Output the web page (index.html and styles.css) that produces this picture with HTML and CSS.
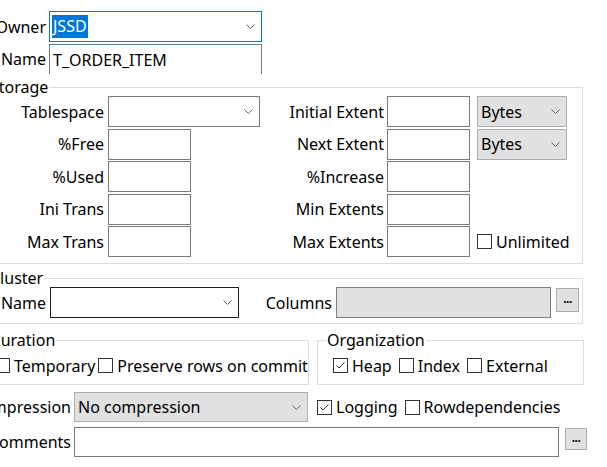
FILE: index.html
```html
<!DOCTYPE html>
<html>
<head>
<meta charset="utf-8">
<link rel="stylesheet" href="styles.css">
</head>
<body>
<div class="page">
  <div class="top">
    <div class="lbl">Owner</div>
    <div class="combo focus"><span class="sel">JSSD</span><svg class="chev" width="9" height="5" viewBox="0 0 9 5"><path d="M0.5 0.5 L4.5 4.5 L8.5 0.5"/></svg></div>
    <div class="lbl">Name</div>
    <div class="text name">T_ORDER_ITEM</div>
  </div>

  <fieldset class="group storage">
    <legend>Storage</legend>
    <div class="sgrid">
      <div class="lbl">Tablespace</div>
      <div class="combo"><span></span><svg class="chev" width="9" height="5" viewBox="0 0 9 5"><path d="M0.5 0.5 L4.5 4.5 L8.5 0.5"/></svg></div>
      <div class="lbl r">Initial Extent</div>
      <div class="text sm"></div>
      <div class="combo gray unit"><span>Bytes</span><svg class="chev" width="9" height="5" viewBox="0 0 9 5"><path d="M0.5 0.5 L4.5 4.5 L8.5 0.5"/></svg></div>

      <div class="lbl">%Free</div>
      <div class="text sm"></div>
      <div class="lbl r">Next Extent</div>
      <div class="text sm"></div>
      <div class="combo gray unit"><span>Bytes</span><svg class="chev" width="9" height="5" viewBox="0 0 9 5"><path d="M0.5 0.5 L4.5 4.5 L8.5 0.5"/></svg></div>

      <div class="lbl">%Used</div>
      <div class="text sm"></div>
      <div class="lbl r">%Increase</div>
      <div class="text sm"></div>
      <div></div>

      <div class="lbl">Ini Trans</div>
      <div class="text sm"></div>
      <div class="lbl r">Min Extents</div>
      <div class="text sm"></div>
      <div></div>

      <div class="lbl">Max Trans</div>
      <div class="text sm"></div>
      <div class="lbl r">Max Extents</div>
      <div class="text sm"></div>
      <div class="chk"><span class="box"></span><span>Unlimited</span></div>
    </div>
  </fieldset>

  <fieldset class="group cluster">
    <legend>Cluster</legend>
    <div class="crow">
      <div class="lbl cname">Name</div>
      <div class="combo dark ccombo"><span></span><svg class="chev" width="9" height="5" viewBox="0 0 9 5"><path d="M0.5 0.5 L4.5 4.5 L8.5 0.5"/></svg></div>
      <div class="lbl ccol">Columns</div>
      <div class="text disabled cols"></div>
      <div class="btn">...</div>
    </div>
  </fieldset>

  <div class="pair">
    <fieldset class="group dur">
      <legend>Duration</legend>
      <div class="checks">
        <div class="chk"><span class="box"></span><span>Temporary</span></div>
        <div class="chk"><span class="box"></span><span>Preserve rows on commit</span></div>
      </div>
    </fieldset>
    <fieldset class="group org">
      <legend>Organization</legend>
      <div class="checks">
        <div class="chk"><span class="box"><svg width="13" height="13" viewBox="0 0 13 13"><path d="M2.5 6.5 L5 9 L10.5 3.5"/></svg></span><span>Heap</span></div>
        <div class="chk"><span class="box"></span><span>Index</span></div>
        <div class="chk"><span class="box"></span><span>External</span></div>
      </div>
    </fieldset>
  </div>

  <div class="row comp">
    <div class="lbl blbl">Compression</div>
    <div class="combo gray compsel"><span>No compression</span><svg class="chev" width="9" height="5" viewBox="0 0 9 5"><path d="M0.5 0.5 L4.5 4.5 L8.5 0.5"/></svg></div>
    <div class="checks inline">
      <div class="chk"><span class="box"><svg width="13" height="13" viewBox="0 0 13 13"><path d="M2.5 6.5 L5 9 L10.5 3.5"/></svg></span><span>Logging</span></div>
      <div class="chk"><span class="box"></span><span>Rowdependencies</span></div>
    </div>
  </div>

  <div class="row comm">
    <div class="lbl blbl">Comments</div>
    <div class="text commbox"></div>
    <div class="btn cbtn">...</div>
  </div>
</div>
</body>
</html>
```

FILE: styles.css
```css
* { box-sizing: border-box; }
html, body { margin: 0; padding: 0; background: #fff; overflow: hidden; }
body {
  font-family: "Noto Sans", "Open Sans", sans-serif;
  font-size: 16px;
  color: #000;
  padding-top: 11px;
}
.page { margin-left: -19px; width: 640px; }

.lbl {
  display: flex;
  justify-content: flex-end;
  align-items: center;
  white-space: nowrap;
  padding-right: 3px;
}

.combo, .text {
  height: 31px;
  border: 1px solid #7a7a7a;
  background: #fff;
  display: flex;
  align-items: center;
  white-space: nowrap;
}
.combo { justify-content: space-between; padding: 0 6px 0 3px; }
.text { padding: 0 3px; }
.combo.focus { border-color: #0078d7; }
.combo.gray { background: #e1e1e1; border-color: #adadad; }
.combo.dark { border-color: #1e1e1e; }
.chev { flex: none; }
.chev path { fill: none; stroke: #606060; stroke-width: 1; }
.sel { background: #0078d7; color: #fff; line-height: 23px; padding: 0 1px 0 1px; margin-left: -1px; }

.top {
  display: grid;
  grid-template-columns: 68px 213px;
  grid-template-rows: 31px 30px;
  row-gap: 2px;
}
.text.name { height: 30px; border-bottom: none; padding-left: 3px; }

.group {
  margin: 0;
  padding: 0;
  border: 1px solid #dcdcdc;
  min-width: 0;
}
.group legend {
  line-height: 18px;
  padding: 0 1px;
  margin-left: 7px;
  white-space: nowrap;
}
.storage { margin-top: 4px; width: 602px; padding-bottom: 6px; }
.sgrid {
  display: grid;
  grid-template-columns: 126px 152px 127px 90px 90px;
  grid-auto-rows: 31px;
  row-gap: 1.5px;
}
.sgrid .lbl { padding-right: 4px; }
.sgrid .lbl.r { padding-right: 3px; }
.text.sm { width: 83px; height: 31px; }
.unit { width: 90px; }

.cluster { margin-top: 5px; width: 602px; padding-bottom: 5px; }
.crow { display: flex; height: 31px; }
.cname { width: 68px; padding-right: 4px; }
.ccombo { width: 189px; }
.ccol { width: 97px; padding-right: 4px; }
.text.disabled { background: #e1e1e1; border-color: #7f7f7f; }
.cols { width: 215px; }
.btn {
  width: 23px;
  height: 24px;
  margin-left: 5px;
  margin-top: 1px;
  background: #e1e1e1;
  border: 1px solid #adadad;
  display: flex;
  align-items: center;
  justify-content: center;
  font-size: 12px;
  font-weight: bold;
  letter-spacing: -0.5px;
  line-height: 1;
  padding-bottom: 3px;
}

.pair { display: flex; margin-top: 7px; }
.dur { width: 328px; padding: 6px 0 8px 13px; }
.org { width: 267px; margin-left: 8px; padding: 6px 0 8px 15px; }
.dur legend, .org legend { margin-left: -7px; }
.checks { display: flex; height: 21px; align-items: center; white-space: nowrap; }
.chk { display: flex; align-items: center; margin-right: 3px; }
.org .chk { margin-right: 7px; }
.box {
  width: 15px;
  height: 15px;
  border: 1px solid #333;
  background: #fff;
  margin-right: 4px;
  flex: none;
  display: flex;
}
.box svg path { fill: none; stroke: #333; stroke-width: 1; }

.row { display: flex; }
.comp { margin-top: 7px; height: 30px; align-items: center; }
.blbl { width: 93px; height: 30px; }
.compsel { width: 234px; height: 30px; }
.inline { margin-left: 9px; }
.inline .chk { margin-right: 7px; }
.comm { margin-top: 5px; height: 30px; }
.commbox { width: 485px; height: 30px; }
.cbtn { width: 22px; height: 22px; margin-left: 6px; }
```
